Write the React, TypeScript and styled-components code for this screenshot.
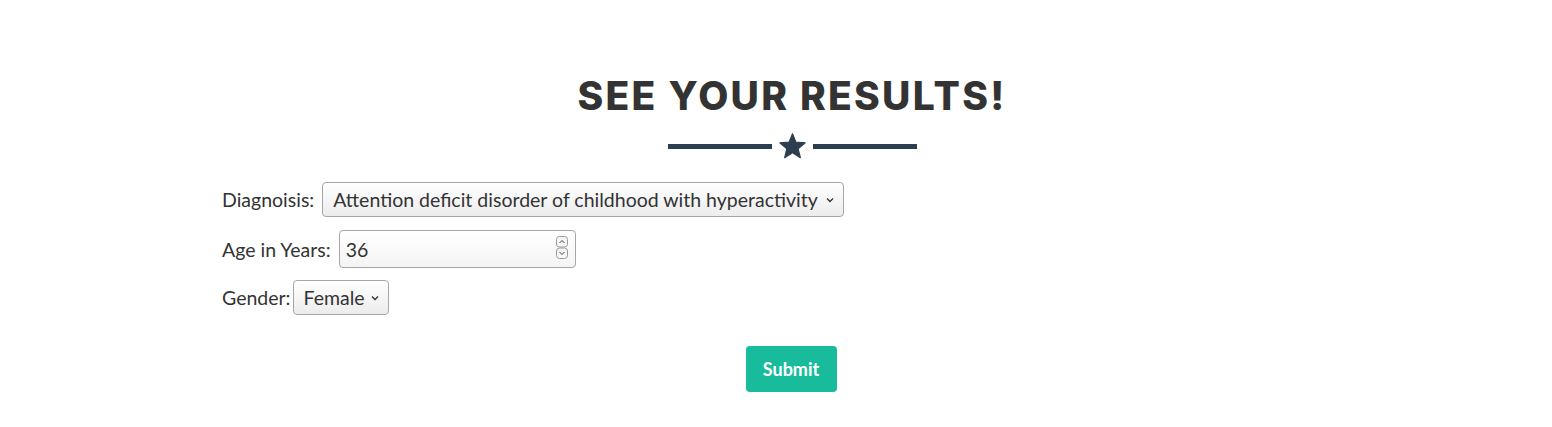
import React from "react";
import styled, { createGlobalStyle } from "styled-components";

const Global = createGlobalStyle`
  html, body { margin: 0; padding: 0; background: #ffffff; }
  body { font-family: Lato, "Open Sans", sans-serif; color: #2c3e50; }
  * { box-sizing: border-box; }
`;

const Page = styled.div`
  width: 1552px;
  height: 427px;
  padding-top: 74px;
`;

const Container = styled.div`
  width: 1170px;
  margin-left: 207px;
  padding: 0 15px;
`;

const Heading = styled.h2`
  margin: 0;
  text-align: center;
  font-family: Inter, "Open Sans", sans-serif;
  font-weight: 800;
  font-size: 39px;
  line-height: 44px;
  letter-spacing: 2.25px;
  color: #333333;
  text-transform: uppercase;
`;

const Divider = styled.div`
  display: flex;
  align-items: center;
  justify-content: center;
  gap: 7px;
  margin-top: 14px;
  height: 28px;
`;

const Line = styled.div`
  width: 104px;
  height: 5px;
  background: #2c3e50;
`;

const Form = styled.form`
  margin-top: 22px;
  color: #333333;
`;

const Row = styled.div<{ $mb: number; $gap: number }>`
  display: flex;
  align-items: center;
  gap: ${(p) => p.$gap}px;
  margin-bottom: ${(p) => p.$mb}px;
`;

const Label = styled.label`
  font-family: Lato, sans-serif;
  font-size: 19.5px;
  color: #333333;
`;

const SelectWrap = styled.div`
  position: relative;
  display: inline-flex;
`;

const Select = styled.select<{ $w: number }>`
  appearance: none;
  -webkit-appearance: none;
  width: ${(p) => p.$w}px;
  height: 35px;
  padding: 0 12px 0 10px;
  font-family: Lato, sans-serif;
  font-size: 19.5px;
  color: #333333;
  border: 1px solid #a6a6a6;
  border-radius: 4px;
  background: linear-gradient(#ffffff, #ececec);
  outline: none;
`;

const Chevron = styled.svg`
  position: absolute;
  right: 10px;
  top: 15px;
  width: 8px;
  height: 6px;
  pointer-events: none;
`;

const NumberWrap = styled.div`
  position: relative;
  display: inline-flex;
`;

const NumberInput = styled.input`
  width: 237px;
  height: 38px;
  padding: 0 30px 0 6px;
  font-family: Lato, sans-serif;
  font-size: 19.5px;
  color: #333333;
  border: 1px solid #a6a6a6;
  border-radius: 4px;
  background: linear-gradient(#ffffff, #f4f4f4);
  outline: none;
  -moz-appearance: textfield;
  &::-webkit-inner-spin-button,
  &::-webkit-outer-spin-button {
    -webkit-appearance: none;
    margin: 0;
  }
`;

const Spinner = styled.svg`
  position: absolute;
  right: 8px;
  top: 6px;
  width: 12px;
  height: 24px;
  pointer-events: none;
`;

const SubmitRow = styled.div`
  display: flex;
  justify-content: center;
  margin-top: 31px;
`;

const Button = styled.button`
  width: 91px;
  height: 46px;
  border: none;
  border-radius: 4px;
  background: #18bc9c;
  color: #ffffff;
  font-family: Lato, sans-serif;
  font-weight: 700;
  font-size: 18px;
  cursor: pointer;
  transform: translateX(-1px);
`;

const Star = () => (
  <svg width="27" height="26" viewBox="0 0 24 23">
    <path
      d="M12 0.6 L15.1 8.1 L23.3 8.6 L17 13.9 L19 21.9 L12 17.6 L5 21.9 L7 13.9 L0.7 8.6 L8.9 8.1 Z"
      fill="#2c3e50"
      stroke="#2c3e50"
      strokeWidth="1"
      strokeLinejoin="round"
    />
  </svg>
);

const ChevronIcon = () => (
  <Chevron viewBox="0 0 8 6">
    <path d="M1 1.5 L4 4.5 L7 1.5" fill="none" stroke="#333" strokeWidth="1.4" />
  </Chevron>
);

export default function App() {
  return (
    <Page>
      <Global />
      <Container>
        <Heading>See Your Results!</Heading>
        <Divider>
          <Line />
          <Star />
          <Line />
        </Divider>
        <Form onSubmit={(e) => e.preventDefault()}>
          <Row $mb={13} $gap={8}>
            <Label htmlFor="diag">Diagnoisis:</Label>
            <SelectWrap>
              <Select id="diag" $w={522} defaultValue="adhd">
                <option value="adhd">Attention deficit disorder of childhood with hyperactivity</option>
              </Select>
              <ChevronIcon />
            </SelectWrap>
          </Row>
          <Row $mb={12} $gap={8}>
            <Label htmlFor="age">Age in Years:</Label>
            <NumberWrap>
              <NumberInput id="age" type="number" defaultValue={36} />
              <Spinner viewBox="0 0 12 24">
                <rect x="0.5" y="0.5" width="11" height="10.5" rx="3" fill="#f6f6f6" stroke="#9a9a9a" />
                <path d="M3.5 7 L6 4.5 L8.5 7" fill="none" stroke="#444" strokeWidth="1" />
                <rect x="0.5" y="12" width="11" height="10.5" rx="3" fill="#f6f6f6" stroke="#9a9a9a" />
                <path d="M3.5 16 L6 18.5 L8.5 16" fill="none" stroke="#444" strokeWidth="1" />
              </Spinner>
            </NumberWrap>
          </Row>
          <Row $mb={0} $gap={2}>
            <Label htmlFor="gender">Gender:</Label>
            <SelectWrap>
              <Select id="gender" $w={96} defaultValue="f">
                <option value="f">Female</option>
                <option value="m">Male</option>
              </Select>
              <ChevronIcon />
            </SelectWrap>
          </Row>
          <SubmitRow>
            <Button type="submit">Submit</Button>
          </SubmitRow>
        </Form>
      </Container>
    </Page>
  );
}
